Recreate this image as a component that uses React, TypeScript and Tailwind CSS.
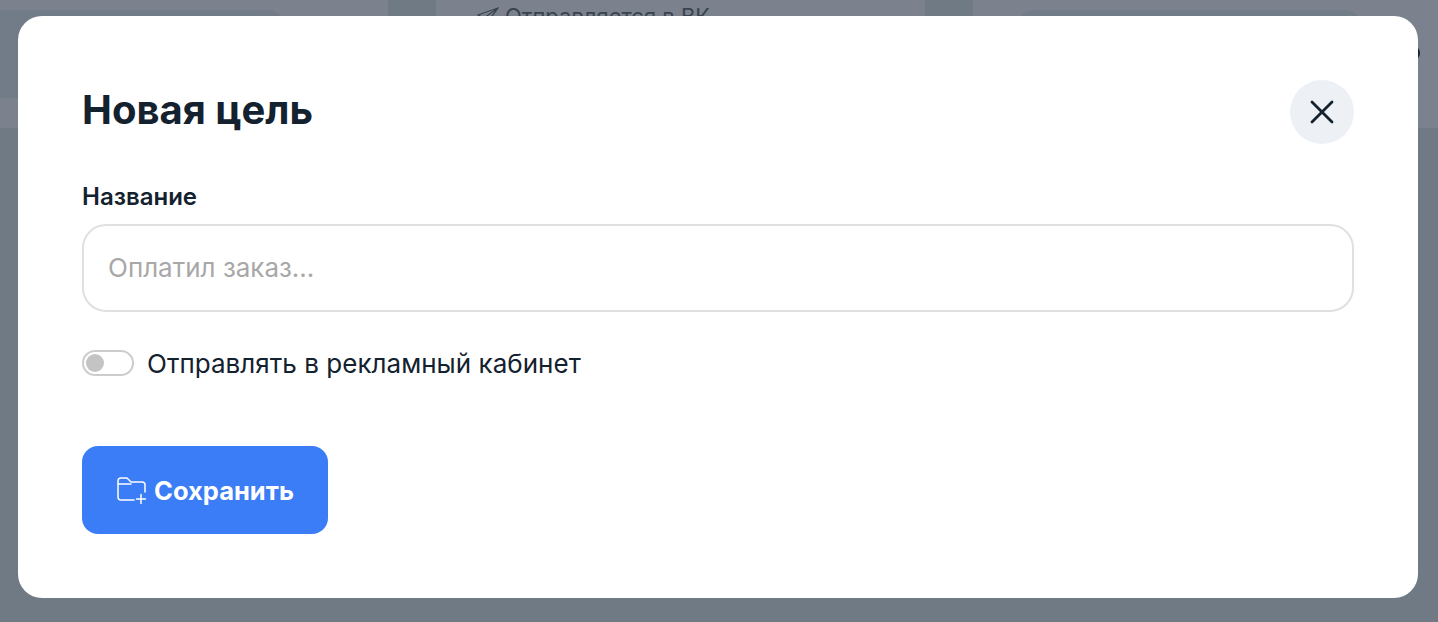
import React from 'react';

const App: React.FC = () => {
    return (
        <div className="relative h-[622px] w-[1438px] overflow-hidden bg-[#6f7a85] font-['Inter',sans-serif]">
            {/* страница за затемнением */}
            <div className="flex h-32 bg-[#7b828d]">
                <div className="mt-2.5 h-[88px] w-[284px] shrink-0 rounded-r-2xl bg-[#727c88]" />
                <div className="ml-[104px] h-full w-12 shrink-0 bg-[#6f7a85]" />
                <div className="ml-[41px] flex h-4 w-[448px] shrink-0 items-start gap-1.5 text-[22px] leading-8 text-[#3a4450]">
                    <svg className="mt-1.5 shrink-0" width="22" height="20" viewBox="0 0 22 20" fill="none" stroke="currentColor" strokeWidth="1.3">
                        <path d="M21 2 1 9l6 3 2 7 3-5 9-12ZM7 12 21 2" />
                    </svg>
                    <span className="whitespace-nowrap">Отправляется в ВК</span>
                </div>
                <div className="h-full w-12 shrink-0 bg-[#6f7a85]" />
                <div className="ml-[45px] mt-2.5 h-[88px] w-[343px] shrink-0 rounded-2xl bg-[#727c88]" />
                <div className="ml-[45px] mt-[46px] h-3.5 w-3.5 shrink-0 rounded-full border-2 border-[#14212e]" />
            </div>

            <div className="absolute left-[18px] top-4 h-[582px] w-[1400px] rounded-3xl bg-white px-16 pt-16">
                <div className="flex h-16 items-center justify-between">
                    <h2 className="-mt-1 text-[40px] font-bold leading-none text-[#14212e]">Новая цель</h2>
                    <button className="flex h-16 w-16 items-center justify-center rounded-full bg-[#edf0f5]">
                        <svg width="26" height="26" viewBox="0 0 26 26" fill="none" stroke="#14212e" strokeWidth="2.8" strokeLinecap="round">
                            <path d="M3 3l20 20M23 3 3 23" />
                        </svg>
                    </button>
                </div>

                <label className="mt-[38px] block text-2xl font-semibold leading-[30px] text-[#14212e]">Название</label>
                <div className="mt-3 flex h-[88px] items-center rounded-3xl border-2 border-[#e0e0e0] px-6">
                    <span className="-mt-px text-[26px] text-[#a8a8a8]">Оплатил заказ...</span>
                </div>

                <div className="mt-[38px] flex h-[28px] items-center gap-[13px]">
                    <div className="-mt-[3px] flex h-[26px] w-[52px] items-center rounded-full border-2 border-[#cccccc] pl-0.5">
                        <div className="h-[18px] w-[18px] rounded-full bg-[#c4c4c4]" />
                    </div>
                    <span className="text-[26px] leading-7 tracking-[0.03px] text-[#14212e]">Отправлять в рекламный кабинет</span>
                </div>

                <button className="mt-[68px] flex h-[88px] w-[246px] items-center justify-center gap-[7px] rounded-2xl bg-[#3b7cf7] text-[25.500px] font-bold text-white">
                    <svg width="31" height="28" viewBox="0 0 31 28" fill="none" stroke="white" strokeWidth="1.5" strokeLinecap="round" strokeLinejoin="round">
                        <path d="M18 24H5a3 3 0 0 1-3-3V5a3 3 0 0 1 3-3h6l4 4h11a3 3 0 0 1 3 3v7M2 8h13" />
                        <path d="M25 18.500v9M20.500 23h9" />
                    </svg>
                    <span className="mt-0.5">Сохранить</span>
                </button>
            </div>
        </div>
    );
};

export default App;
